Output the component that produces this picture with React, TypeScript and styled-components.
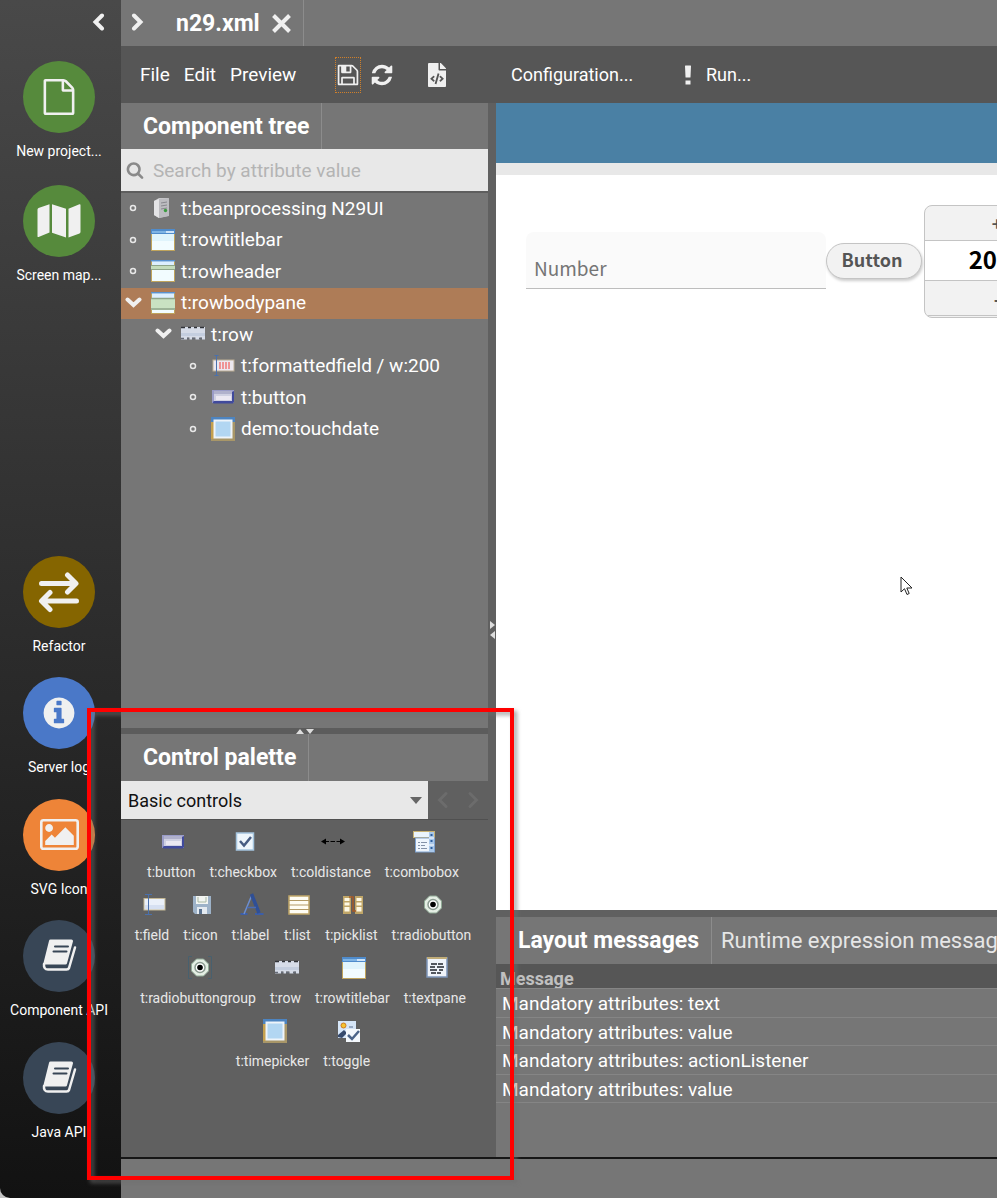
import React from "react";
import styled, { createGlobalStyle, css } from "styled-components";
import { FaFileCode } from "react-icons/fa";

const ui = `Roboto, "Open Sans", sans-serif`;
const source = `"Noto Sans CJK JP", "Noto Sans", sans-serif`;

const GlobalStyle = createGlobalStyle`
  * { box-sizing: border-box; }
  body { margin: 0; background: #c4c4c4; font-family: ${ui}; font-size: 19px; color: #fff; }
  button, input, select { font: inherit; color: inherit; }
  button { background: none; border: 0; padding: 0; cursor: pointer; }
  ul { list-style: none; margin: 0; padding: 0; }
  svg { display: block; flex: none; }
`;

/* ---------- line icons ---------- */

const paths = {
  file: "M1596 380q28 28 48 76t20 88v1152q0 40-28 68t-68 28h-1344q-40 0-68-28t-28-68v-1600q0-40 28-68t68-28h896q40 0 88 20t76 48zm-444-244v376h376q-10-29-22-41l-313-313q-12-12-41-22zm384 1528v-1024h-416q-40 0-68-28t-28-68v-416h-768v1536h1280z",
  info: "M1152 1376v-160q0-14-9-23t-23-9h-96v-512q0-14-9-23t-23-9h-320q-14 0-23 9t-9 23v160q0 14 9 23t23 9h96v320h-96q-14 0-23 9t-9 23v160q0 14 9 23t23 9h448q14 0 23-9t9-23zm-128-896v-160q0-14-9-23t-23-9h-192q-14 0-23 9t-9 23v160q0 14 9 23t23 9h192q14 0 23-9t9-23zm640 416q0 209-103 385.5t-279.5 279.5-385.5 103-385.5-103-279.5-279.5-103-385.5 103-385.5 279.5-279.5 385.5-103 385.5 103 279.5 279.5 103 385.5z",
  picture: "M576 576q0 80-56 136t-136 56-136-56-56-136 56-136 136-56 136 56 56 136zm1024 384v448h-1408v-192l320-320 160 160 512-512zm96-704h-1600q-13 0-22.5 9.5t-9.5 22.5v1216q0 13 9.5 22.5t22.5 9.5h1600q13 0 22.5-9.5t9.5-22.5v-1216q0-13-9.5-22.5t-22.5-9.5zm160 32v1216q0 66-47 113t-113 47h-1600q-66 0-113-47t-47-113v-1216q0-66 47-113t113-47h1600q66 0 113 47t47 113z",
  save: "M512 1536h768v-384h-768v384zm896 0h128v-896q0-14-10-38.5t-20-34.5l-281-281q-10-10-34-20t-39-10v416q0 40-28 68t-68 28h-576q-40 0-68-28t-28-68v-416h-128v1280h128v-416q0-40 28-68t68-28h832q40 0 68 28t28 68v416zm-384-928v-320q0-13-9.5-22.5t-22.5-9.5h-192q-13 0-22.5 9.5t-9.5 22.5v320q0 13 9.5 22.5t22.5 9.5h192q13 0 22.5-9.5t9.5-22.5zm640 32v928q0 40-28 68t-68 28h-1344q-40 0-68-28t-28-68v-1344q0-40 28-68t68-28h928q40 0 88 20t76 48l280 280q28 28 48 76t20 88z",
  refresh: "M1639 1056q0 5-1 7-64 268-268 434.5t-478 166.5q-146 0-282.5-55t-243.5-157l-129 129q-19 19-45 19t-45-19-19-45v-448q0-26 19-45t45-19h448q26 0 45 19t19 45-19 45l-137 137q71 66 161 102t187 36q134 0 250-65t186-179q11-17 53-117 8-23 30-23h192q13 0 22.5 9.5t9.5 22.5zm25-800v448q0 26-19 45t-45 19h-448q-26 0-45-19t-19-45 19-45l138-138q-148-137-349-137-134 0-250 65t-186 179q-11 17-53 117-8 23-30 23h-199q-13 0-22.5-9.5t-9.5-22.5v-7q65-268 270-434.5t480-166.5q146 0 284 55.5t245 156.5l130-129q19-19 45-19t45 19 19 45z",
  search: "M1216 832q0-185-131.5-316.5t-316.5-131.5-316.5 131.5-131.5 316.5 131.5 316.5 316.5 131.5 316.5-131.5 131.5-316.5zm512 832q0 52-38 90t-90 38q-54 0-90-38l-343-342q-179 124-399 124-143 0-273.5-55.5t-225-150-150-225-55.5-273.5 55.5-273.5 150-225 225-150 273.5-55.5 273.5 55.5 225 150 150 225 55.5 273.5q0 220-124 399l343 343q37 37 37 90z",
};

function Glyph({ name, size, box = "0 0 1792 1792" }: { name: keyof typeof paths; size: number; box?: string }) {
  return (
    <svg width={size} height={size} viewBox={box} fill="currentColor" aria-hidden="true">
      <path d={paths[name]} />
    </svg>
  );
}

function MapGlyph() {
  return (
    <svg width="44" height="36" viewBox="0 0 44 36" fill="currentColor" aria-hidden="true">
      <path d="M0.5 6.5Q.5 5.500 1.500 5L12.500 1.200V29.500L1.600 34Q.5 34.300.5 33.200ZM15 1.200L29 5.800V34.500L15 29.700ZM31.500 5.800L42.400 1.300Q43.500 1 43.500 2.100V29Q43.500 30 42.500 30.400L31.500 34.500Z" />
    </svg>
  );
}

function BookGlyph() {
  return (
    <svg width="36" height="36" viewBox="0 0 36 36" fill="none" strokeLinejoin="round" aria-hidden="true">
      <path d="M9.500 3H30.500L24.500 25H4Z" fill="currentColor" stroke="currentColor" strokeWidth="3" />
      <path d="M3 26Q2.500 31.500 7 31.500H25.500Q27.500 31.500 28 30L34 9.500" stroke="currentColor" strokeWidth="2.500" strokeLinecap="round" />
      <path d="M14 8.500H27M12.500 13.500H25.500" stroke="#384656" strokeWidth="2" strokeLinecap="round" />
    </svg>
  );
}

function SwapGlyph() {
  return (
    <svg width="42" height="42" viewBox="0 0 42 42" fill="none" stroke="currentColor" strokeWidth="5" strokeLinecap="round" strokeLinejoin="round" aria-hidden="true">
      <path d="M3.500 12.500H37.500M29.500 4L38 12.500L29.500 21M38.500 30H4M12 21.500L3.500 30L12 38.500" />
    </svg>
  );
}

function Chevron({ dir, stroke = 4 }: { dir: "left" | "right" | "down"; stroke?: number }) {
  const d = { left: "M11 2.500L4.500 9L11 15.500", right: "M5 2.500L11.500 9L5 15.500", down: "M2.500 5.500L8.500 11L14.500 5.500" }[dir];
  return (
    <svg width="17" height="18" viewBox="0 0 17 18" fill="none" stroke="currentColor" strokeWidth={stroke} strokeLinecap="round" aria-hidden="true">
      <path d={d} />
    </svg>
  );
}

/* ---------- component pictograms, all on a 24px tile ---------- */

type Kind =
  | "server" | "titlebar" | "header" | "body" | "row" | "formatted" | "button" | "panel"
  | "checkbox" | "distance" | "combo" | "field" | "disk" | "letter" | "list" | "picklist"
  | "radio" | "radiogroup" | "textpane" | "toggle";

const windowFrame = (
  <>
    <rect x="0.500" y="1.500" width="23" height="21" fill="#f2fcff" stroke="#c0a45c" />
    <path d="M0 1h24v1.500H0z" fill="#5a92d0" />
  </>
);

const radioDot = (
  <>
    <path d="M8.500 3h7l5 5v7l-5 5h-7l-5-5V8z" fill="#e4eee4" stroke="#90aa96" />
    <circle cx="12" cy="11.500" r="5" fill="#fff" stroke="#8a9a90" strokeWidth="1.500" />
    <circle cx="12" cy="11.500" r="2.800" fill="#000" />
  </>
);

const art: Record<Kind, React.ReactNode> = {
  server: (
    <>
      <path d="M3 5l5-3h9v18l-9 2-5-3z" fill="#c9c9cb" />
      <path d="M3 5l5-2v19l-5-3z" fill="#e4e4e6" />
      <path d="M8 3l10-1v18L8 22z" fill="#bcbcc0" />
      <path d="M10 7l6-1M10 10l6-1M10 13l6-1" stroke="#88888e" />
      <circle cx="14.500" cy="14.500" r="1.700" fill="#3a9c3e" />
    </>
  ),
  titlebar: (
    <>
      {windowFrame}
      <path d="M0 1h24v5H0z" fill="#4f8bcb" />
      <path d="M1 3h14v2H1z" fill="#7fb4e4" />
      <path d="M15 3h8v2h-8z" fill="#cfe4f8" />
      <path d="M1 6h22v7H1z" fill="#e0f4fc" />
    </>
  ),
  header: (
    <>
      {windowFrame}
      <path d="M1 3h22v3H1z" fill="#ddefff" />
      <path d="M0 6h24v5H0z" fill="#c4dcbc" />
      <path d="M0 6.500h24M0 10.500h24" stroke="#8fa58a" />
    </>
  ),
  body: (
    <>
      {windowFrame}
      <path d="M1 3h22v4H1z" fill="#ddefff" />
      <path d="M0 7h24v12H0z" fill="#c9e2c2" />
      <path d="M0 7.500h24M0 18h24" stroke="#8fa58a" strokeWidth="1.500" />
    </>
  ),
  row: (
    <>
      <path d="M0 5h24v12.500h-3v-2h-2.500v2h-4v-2H11v2H8.500v-2H6v2H0z" fill="#d6dce8" />
      <path d="M0 11h24v3H0z" fill="#c4cedf" />
      <path d="M0 5.500h4M7 5.500h3M13 5.500h3M19 5.500h4" stroke="#303338" strokeWidth="1.500" />
      <path d="M0 16.500h3M6 16.500h2M11 16.500h3M18 16.500h3" stroke="#666c78" strokeWidth="1.500" />
    </>
  ),
  formatted: (
    <>
      <rect x="2" y="6" width="21" height="11" fill="#ece8f0" stroke="#bcae94" />
      <path d="M9 8v7M12 8v7M15 8v7M18 8v7" stroke="#f08080" strokeWidth="1.600" />
      <path d="M5.500 1.500v20M3.500 1.500h4M3.500 21.500h4" stroke="#4a70ac" />
    </>
  ),
  button: (
    <>
      <path d="M1 5h22v13H1z" fill="#9a9cc8" />
      <path d="M1.500 17l1 1.500H22l1-1.500V6z" fill="#404a9c" />
      <rect x="3" y="6" width="18" height="10" fill="#cfd0e2" />
      <path d="M3 6h18v3H3z" fill="#b0b1cc" />
      <path d="M5 11h15v4H5z" fill="#ebe8f2" />
    </>
  ),
  panel: (
    <>
      <path d="M0 0h24v24H0z" fill="#a89668" />
      <path d="M0 0h24v5H0z" fill="#4d84c0" />
      <path d="M0 5h3v17H0z" fill="#c4a04e" />
      <rect x="3.500" y="3.500" width="17" height="17" fill="#b2d6f2" stroke="#eef4fa" strokeWidth="2" />
    </>
  ),
  checkbox: (
    <>
      <rect x="3.500" y="3" width="17" height="17" fill="#eef6fc" stroke="#a4c4de" strokeWidth="1.500" />
      <path d="M7 11l4 4.500 7-8.500" fill="none" stroke="#465c82" strokeWidth="2.500" />
    </>
  ),
  distance: (
    <>
      <path d="M2 11.500h20" stroke="#000" />
      <path d="M0 11.500l5-3v6zM24 11.500l-5-3v6z" fill="#000" />
      <path d="M8 11.500h1.500M14 11.500h1.500" stroke="#606060" />
    </>
  ),
  combo: (
    <>
      <rect x="1.500" y="1.500" width="21" height="6" fill="#eaf4fc" stroke="#c8b272" />
      <rect x="3.500" y="8" width="19" height="14" fill="#eef5fc" stroke="#7ea2d0" />
      <path d="M17 2h5v20h-5z" fill="#a9c8ea" />
      <path d="M18.500 5h2M18.500 11h2M18.500 18h2" stroke="#2c5fa0" strokeWidth="2" />
      <path d="M6 12.500h2M9 12.500h6M6 15.500h2M9 15.500h4M6 18.500h2M9 18.500h6" stroke="#8492a8" />
      <path d="M17 8h5M17 15h5" stroke="#fff" />
    </>
  ),
  field: (
    <>
      <rect x="2" y="5.500" width="21" height="11.500" fill="#eaf0fa" stroke="#c4b894" />
      <path d="M3 12h19v4H3z" fill="#d6e0f2" />
      <path d="M6.500 1.500v20M3 1.500h7M3 21.500h7" stroke="#4a70ac" />
    </>
  ),
  disk: (
    <>
      <path d="M3 3h18v18H5l-2-2z" fill="#9db2c8" />
      <path d="M6 3h12v8H6z" fill="#f2f5f2" />
      <path d="M7 14h10v7H7z" fill="#e4eaf0" />
      <path d="M9 16h3v5H9z" fill="#5a7290" />
      <path d="M8 4v5h8V4" fill="none" stroke="#a9b8a4" />
    </>
  ),
  letter: (
    <>
      <path d="M0.500 21h7M15 21h8.500" stroke="#3c5ea8" strokeWidth="2" />
      <path d="M11.500 3L4 21" stroke="#6c8ed0" strokeWidth="1.500" />
      <path d="M11.500 1l7.500 19" stroke="#2f4f96" strokeWidth="3.500" />
      <path d="M7 14.500h9" stroke="#4a6cb4" strokeWidth="1.500" />
    </>
  ),
  list: (
    <>
      <rect x="2" y="3" width="20" height="18" fill="#fffdf4" stroke="#c0a668" strokeWidth="1.500" />
      <path d="M2 7.500h20M2 12h20M2 16.500h20" stroke="#b39a66" strokeWidth="1.200" />
    </>
  ),
  picklist: (
    <>
      <path d="M2 3h8v18H2zM14 3h8v18h-8z" fill="#c0a668" />
      <path d="M3.500 5h5v3h-5zM3.500 9.500h5v3h-5zM3.500 14h5v4.500h-5zM15.500 5h5v3h-5zM15.500 9.500h5v3h-5zM15.500 14h5v4.500h-5z" fill="#fdf8e4" />
      <path d="M8 4h4v14h3" fill="none" stroke="#a85a24" strokeWidth="1.500" />
    </>
  ),
  radio: radioDot,
  radiogroup: (
    <>
      {radioDot}
      <path d="M4 .5H.5v22H4M20 .5h3.500v22H20" fill="none" stroke="#48606e" />
    </>
  ),
  textpane: (
    <>
      <rect x="2" y="2" width="20" height="19" fill="#f0f4fa" stroke="#7c94b8" strokeWidth="1.500" />
      <path d="M2 2h20" stroke="#c0ac78" strokeWidth="2" />
      <path d="M6 8h6M13 8h5M5 11h5M12 11h7M5 14h7M14 14h4M6 17h5M12 17h4" stroke="#20242c" strokeWidth="1.500" />
    </>
  ),
  toggle: (
    <>
      <rect x="1" y="2" width="18" height="17" fill="#d6e6f8" />
      <circle cx="6.500" cy="6.500" r="2.500" fill="#f4c430" stroke="#d07a20" />
      <path d="M1 18v-2l6-5 3 3-5 5z" fill="#364a6c" />
      <path d="M12 8h4" stroke="#5a6f90" />
      <path d="M9 10h14v13H9z" fill="#f4f8fc" />
      <path d="M11 16l4 4 7-8" fill="none" stroke="#4c6488" strokeWidth="2.500" />
    </>
  ),
};

function Picto({ kind }: { kind: Kind }) {
  return (
    <svg width="24" height="24" viewBox="0 0 24 24" aria-hidden="true">
      {art[kind]}
    </svg>
  );
}

/* ---------- frame ---------- */

const Shell = styled.div`
  position: relative;
  display: flex;
  min-height: 100vh;
  overflow: hidden;
`;

const Sidebar = styled.nav`
  display: flex;
  flex-direction: column;
  flex: none;
  width: 121px;
  padding: 0 3px 35px 0;
  background: linear-gradient(#494949, #121212);
  border-bottom-left-radius: 10px;
`;

const SidebarTop = styled.div`
  display: flex;
  justify-content: flex-end;
  align-items: center;
  height: 44px;
  margin-bottom: 17px;
  padding-right: 10px;
  color: #f0f0f0;
`;

const Launchers = styled.ul<{ $bottom?: boolean }>`
  display: grid;
  grid-auto-rows: 1fr;
  height: ${(p) => (p.$bottom ? 607 : 248)}px;
  ${(p) => p.$bottom && css`margin-top: auto;`}
`;

const Launcher = styled.button`
  display: flex;
  flex-direction: column;
  align-items: center;
  gap: 8px;
  width: 100%;
  font-size: 14px;
  line-height: 20px;
  white-space: nowrap;
  color: #fff;
`;

const Disc = styled.span<{ $color: string }>`
  display: grid;
  place-items: center;
  width: 72px;
  height: 72px;
  border-radius: 50%;
  background: ${(p) => p.$color};
  color: #f0f0f0;
`;

const Workspace = styled.div`
  display: flex;
  flex-direction: column;
  flex: 1;
  min-width: 0;
  background: #777;
`;

const TabStrip = styled.div<{ $height: number }>`
  display: flex;
  flex: none;
  height: ${(p) => p.$height}px;
  background: #767676;
  overflow: hidden;
`;

const Tab = styled.div<{ $active?: boolean; $indent?: number }>`
  display: flex;
  align-items: center;
  flex: none;
  gap: 12px;
  padding: 0 12px 0 ${(p) => p.$indent ?? 22}px;
  border-right: 1px solid #8c8c8c;
  font-size: ${(p) => (p.$active ? 23 : 22)}px;
  font-weight: ${(p) => (p.$active ? 700 : 400)};
  color: ${(p) => (p.$active ? "#fff" : "#e6e6e6")};
  white-space: nowrap;
`;

const StripButton = styled.button`
  display: grid;
  place-items: center;
  width: 33px;
  height: 44px;
  color: #f0f0f0;
`;

const Toolbar = styled.div`
  display: flex;
  align-items: center;
  flex: none;
  height: 57px;
  padding-left: 19px;
  background: #565656;
`;

const Menus = styled.div`
  display: flex;
  gap: 14px;
  width: 195px;
`;

const IconTools = styled.div`
  display: flex;
  align-items: center;
  gap: 8px;
  width: 176px;
  color: #f0f0f0;
`;

const IconTool = styled.button<{ $focus?: boolean; $apart?: boolean }>`
  display: grid;
  place-items: center;
  width: 26px;
  height: 36px;
  ${(p) => p.$focus && css`border: 1px dotted #d0802a;`}
  ${(p) => p.$apart && css`margin-left: 21px;`}
`;

const TextTool = styled.button`
  display: flex;
  align-items: center;
  gap: 14px;
  min-width: 173px;
  font-size: 18px;
`;

const Columns = styled.div`
  display: flex;
  flex: 1;
  min-height: 0;
  border-bottom: 2px solid #161616;
`;

const StatusBar = styled.footer`
  flex: none;
  height: 39px;
  background: #767676;
`;

/* ---------- left column ---------- */

const LeftColumn = styled.aside`
  display: flex;
  flex-direction: column;
  flex: none;
  width: 367px;
`;

const SearchBox = styled.label`
  display: flex;
  align-items: center;
  flex: none;
  gap: 9px;
  height: 44px;
  padding-left: 5px;
  background: #e8e8e8;
  border-bottom: 2px solid #5e5e5e;
  color: #8a8a8a;
`;

const SearchInput = styled.input`
  flex: 1;
  min-width: 0;
  border: 0;
  padding: 0;
  outline: 0;
  background: none;
  color: #333;
  &::placeholder { color: #b4b4b4; opacity: 1; }
`;

const TreePane = styled.div`
  flex: 1;
  background: #767676;
`;

const Tree = styled.ul`
  display: grid;
  grid-auto-rows: 1fr;
  height: 252px;
`;

const TreeRow = styled.li<{ $depth: number; $selected?: boolean }>`
  display: flex;
  align-items: center;
  padding: 0 0 1px ${(p) => p.$depth * 30}px;
  background: ${(p) => (p.$selected ? "#ae7c57" : "none")};
`;

const Toggle = styled.span`
  display: grid;
  place-items: center;
  width: 24px;
  margin-right: 6px;
  color: #f0f0f0;
`;

const TreeLabel = styled.button`
  display: flex;
  align-items: center;
  gap: 6px;
  white-space: nowrap;
`;

const HSplitter = styled.div`
  display: flex;
  justify-content: center;
  align-items: center;
  flex: none;
  height: 6px;
  background: #5c5c5c;
`;

const VSplitter = styled.div`
  display: flex;
  flex-direction: column;
  justify-content: center;
  align-items: center;
  flex: none;
  width: 8px;
  background: #606060;
`;

const Palette = styled.section`
  flex: none;
  height: 423px;
  background: #606060;
`;

const PaletteBar = styled.div`
  display: flex;
  align-items: center;
  height: 39px;
  border-bottom: 1px solid #505050;
  color: #6c6c6c;
`;

const SelectWrap = styled.div`
  display: grid;
  align-items: center;
  width: 307px;
  height: 38px;
  background: #e8e8e8;
  > * { grid-area: 1 / 1; }
  > svg { justify-self: end; margin-right: 5px; pointer-events: none; }
`;

const Select = styled.select`
  appearance: none;
  width: 100%;
  height: 100%;
  padding: 0 24px 0 7px;
  border: 0;
  border-radius: 0;
  outline: 0;
  background: none;
  color: #111;
  font-size: 18px;
`;

const PageButton = styled.button`
  display: grid;
  place-items: center;
  width: 30px;
`;

const PaletteRow = styled.div`
  display: flex;
  justify-content: center;
  gap: 14px;
  height: 63px;
  padding: 10px 3px 0 0;
`;

const PaletteItem = styled.button`
  display: flex;
  flex-direction: column;
  align-items: center;
  gap: 8px;
  font-size: 14px;
  line-height: 20px;
  color: #e8e8e8;
  white-space: nowrap;
  svg { margin-left: 4px; }
`;

/* ---------- right column ---------- */

const RightColumn = styled.main`
  display: flex;
  flex-direction: column;
  flex: 1;
  min-width: 0;
`;

const PreviewTitle = styled.div`
  flex: none;
  height: 72px;
  background: #4a80a4;
  border-bottom: 12px solid #e8e8e8;
`;

const Preview = styled.div`
  position: relative;
  display: flex;
  align-items: flex-start;
  flex: 1;
  padding: 30px 0 0 30px;
  background: #fff;
  overflow: hidden;
  font-family: ${source};
`;

const PreviewRow = styled.div`
  display: flex;
  align-items: center;
  flex: none;
  height: 111px;
`;

const NumberField = styled.input`
  width: 300px;
  height: 57px;
  padding: 14px 8px 0;
  border: 0;
  border-bottom: 1px solid #bdbdbd;
  border-radius: 8px 8px 0 0;
  outline: 0;
  background: #fafafa;
  font-size: 19px;
  &::placeholder { color: #757575; opacity: 1; }
`;

const PillButton = styled.button`
  width: 96px;
  height: 36px;
  padding: 0 4px 4px 0;
  border: 1px solid #c4c4c4;
  border-radius: 18px;
  background: #f2f2f2;
  box-shadow: 1px 2px 3px rgba(0, 0, 0, 0.2);
  font-size: 18px;
  font-weight: 700;
  line-height: 24px;
  color: #555;
`;

const Stepper = styled.div`
  align-self: flex-start;
  display: flex;
  flex-direction: column;
  width: 146px;
  height: 113px;
  margin-left: 2px;
  border: 1px solid #c4c4c4;
  border-radius: 8px;
  overflow: hidden;
  background: #f2f2f2;
`;

const StepButton = styled.button`
  height: 35px;
  border-bottom: 1px solid #c4c4c4;
  font-size: 18px;
  font-weight: 700;
  line-height: 20px;
  color: #555;
`;

const StepValue = styled.output`
  height: 40px;
  background: #fff;
  border-bottom: 1px solid #c4c4c4;
  font-size: 24px;
  font-weight: 700;
  line-height: 36px;
  text-align: center;
  color: #000;
`;

const Pointer = styled.svg`
  position: absolute;
  left: 404px;
  top: 401px;
`;

const Messages = styled.section`
  flex: none;
  height: 247px;
  border-top: 7px solid #606060;
  background: #767676;
  overflow: hidden;
`;

const MessageTable = styled.table`
  width: 100%;
  border-collapse: collapse;
  text-align: left;
  line-height: 24px;
  th {
    height: 24px;
    padding: 0 4px;
    background: #565656;
    color: #c0c0c0;
    font-size: 18px;
  }
  th span {
    display: block;
    height: 24px;
    line-height: 30px;
    overflow: hidden;
  }
  td {
    height: 29px;
    padding: 2px 6px 0;
    border-top: 1px solid #858585;
    border-bottom: 1px solid #858585;
    white-space: nowrap;
  }
  tr:nth-child(even) td { height: 28px; }
`;

const Highlight = styled.div`
  position: absolute;
  left: 87px;
  top: 708px;
  width: 427px;
  height: 472px;
  border: 4px solid #f00;
  filter: drop-shadow(3px 3px 2px rgba(110, 110, 110, 0.65));
  pointer-events: none;
`;

/* ---------- data ---------- */

const topLaunchers = [
  { label: "New project...", color: "#568a3c", icon: <Glyph name="file" size={36} /> },
  { label: "Screen map...", color: "#568a3c", icon: <MapGlyph /> },
];

const bottomLaunchers = [
  { label: "Refactor", color: "#856500", icon: <SwapGlyph /> },
  { label: "Server log", color: "#4a78c8", icon: <Glyph name="info" size={36} /> },
  { label: "SVG Icon", color: "#ee8438", icon: <Glyph name="picture" size={39} box="-64 0 1920 1792" /> },
  { label: "Component API", color: "#384656", icon: <BookGlyph /> },
  { label: "Java API", color: "#384656", icon: <BookGlyph /> },
];

const tree: { label: string; kind: Kind; depth: number; open?: boolean; selected?: boolean }[] = [
  { label: "t:beanprocessing N29UI", kind: "server", depth: 0 },
  { label: "t:rowtitlebar", kind: "titlebar", depth: 0 },
  { label: "t:rowheader", kind: "header", depth: 0 },
  { label: "t:rowbodypane", kind: "body", depth: 0, open: true, selected: true },
  { label: "t:row", kind: "row", depth: 1, open: true },
  { label: "t:formattedfield / w:200", kind: "formatted", depth: 2 },
  { label: "t:button", kind: "button", depth: 2 },
  { label: "demo:touchdate", kind: "panel", depth: 2 },
];

const palette: [string, Kind][][] = [
  [["t:button", "button"], ["t:checkbox", "checkbox"], ["t:coldistance", "distance"], ["t:combobox", "combo"]],
  [["t:field", "field"], ["t:icon", "disk"], ["t:label", "letter"], ["t:list", "list"], ["t:picklist", "picklist"], ["t:radiobutton", "radio"]],
  [["t:radiobuttongroup", "radiogroup"], ["t:row", "row"], ["t:rowtitlebar", "titlebar"], ["t:textpane", "textpane"]],
  [["t:timepicker", "panel"], ["t:toggle", "toggle"]],
];

const messages = ["text", "value", "actionListener", "value"];

function LauncherList({ items, bottom }: { items: typeof topLaunchers; bottom?: boolean }) {
  return (
    <Launchers $bottom={bottom}>
      {items.map((l) => (
        <li key={l.label}>
          <Launcher>
            <Disc $color={l.color}>{l.icon}</Disc>
            {l.label}
          </Launcher>
        </li>
      ))}
    </Launchers>
  );
}

function Leaf() {
  return (
    <svg width="8" height="8" viewBox="0 0 8 8" fill="none" stroke="#e8e8e8" strokeWidth="1.500" aria-hidden="true">
      <circle cx="4" cy="4" r="2.500" />
    </svg>
  );
}

export default function App() {
  return (
    <>
      <GlobalStyle />
      <Shell>
        <Sidebar>
          <SidebarTop>
            <button aria-label="Collapse sidebar"><Chevron dir="left" /></button>
          </SidebarTop>
          <LauncherList items={topLaunchers} />
          <LauncherList items={bottomLaunchers} bottom />
        </Sidebar>

        <Workspace>
          <TabStrip $height={46}>
            <StripButton aria-label="Next tab"><Chevron dir="right" /></StripButton>
            <Tab $active>
              n29.xml
              <button aria-label="Close tab">
                <svg width="19" height="19" viewBox="0 0 19 19" stroke="#f0f0f0" strokeWidth="4">
                  <path d="M1.500 1.500l16 16M17.500 1.500l-16 16" />
                </svg>
              </button>
            </Tab>
          </TabStrip>

          <Toolbar>
            <Menus>
              <button>File</button>
              <button>Edit</button>
              <button>Preview</button>
            </Menus>
            <IconTools>
              <IconTool $focus aria-label="Save"><Glyph name="save" size={24} /></IconTool>
              <IconTool aria-label="Reload"><Glyph name="refresh" size={24} /></IconTool>
              <IconTool $apart aria-label="View source"><FaFileCode size={24} /></IconTool>
            </IconTools>
            <TextTool>Configuration...</TextTool>
            <TextTool>
              <svg width="8" height="20" viewBox="0 0 8 20" fill="#f0f0f0" aria-hidden="true">
                <path d="M1 1Q1 .5 1.500.5H6.500Q7 .5 7 1L6.500 12Q6.500 12.500 6 12.500H2Q1.500 12.500 1.500 12ZM1.500 15.500h5v4h-5z" />
              </svg>
              Run...
            </TextTool>
          </Toolbar>

          <Columns>
            <LeftColumn>
              <TabStrip $height={46}>
                <Tab $active>Component tree</Tab>
              </TabStrip>
              <SearchBox>
                <Glyph name="search" size={18} />
                <SearchInput placeholder="Search by attribute value" aria-label="Search by attribute value" />
              </SearchBox>
              <TreePane>
                <Tree>
                  {tree.map((n) => (
                    <TreeRow key={n.label} $depth={n.depth} $selected={n.selected}>
                      <Toggle>{n.open ? <Chevron dir="down" /> : <Leaf />}</Toggle>
                      <TreeLabel><Picto kind={n.kind} />{n.label}</TreeLabel>
                    </TreeRow>
                  ))}
                </Tree>
              </TreePane>
              <HSplitter>
                <svg width="18" height="6" viewBox="0 0 18 6" fill="#ddd" aria-hidden="true">
                  <path d="M0 6L4 1l4 5zM10 1h8l-4 5z" />
                </svg>
              </HSplitter>
              <Palette>
                <TabStrip $height={47}>
                  <Tab $active>Control palette</Tab>
                </TabStrip>
                <PaletteBar>
                  <SelectWrap>
                    <Select aria-label="Control group">
                      <option>Basic controls</option>
                    </Select>
                    <svg width="14" height="7" viewBox="0 0 14 7" fill="#666" aria-hidden="true">
                      <path d="M1 0h12l-6 7z" />
                    </svg>
                  </SelectWrap>
                  <PageButton aria-label="Previous controls"><Chevron dir="left" stroke={3} /></PageButton>
                  <PageButton aria-label="Next controls"><Chevron dir="right" stroke={3} /></PageButton>
                </PaletteBar>
                {palette.map((row, i) => (
                  <PaletteRow key={i}>
                    {row.map(([label, kind]) => (
                      <PaletteItem key={label}><Picto kind={kind} />{label}</PaletteItem>
                    ))}
                  </PaletteRow>
                ))}
              </Palette>
            </LeftColumn>

            <VSplitter>
              <svg width="6" height="18" viewBox="0 0 6 18" fill="#ddd" aria-hidden="true">
                <path d="M1 0l5 4-5 4zM6 10v8l-5-4z" />
              </svg>
            </VSplitter>

            <RightColumn>
              <PreviewTitle />
              <Preview>
                <PreviewRow>
                  <NumberField placeholder="Number" aria-label="Number" />
                  <PillButton>Button</PillButton>
                  <Stepper>
                    <StepButton aria-label="Increase">+</StepButton>
                    <StepValue>2020</StepValue>
                    <StepButton aria-label="Decrease">-</StepButton>
                  </Stepper>
                </PreviewRow>
                <Pointer width="13" height="20" viewBox="0 0 13 20" aria-hidden="true">
                  <path d="M1 1v15l3.500-3.300L7 18.500l2.200-1L6.800 12H12z" fill="#fff" stroke="#222" strokeLinejoin="round" />
                </Pointer>
              </Preview>
              <Messages>
                <TabStrip $height={47}>
                  <Tab $active>Layout messages</Tab>
                  <Tab $indent={9}>Runtime expression messages</Tab>
                </TabStrip>
                <MessageTable>
                  <thead>
                    <tr><th scope="col"><span>Message</span></th></tr>
                  </thead>
                  <tbody>
                    {messages.map((m, i) => (
                      <tr key={i}><td>Mandatory attributes: {m}</td></tr>
                    ))}
                  </tbody>
                </MessageTable>
              </Messages>
            </RightColumn>
          </Columns>
          <StatusBar />
        </Workspace>
        <Highlight />
      </Shell>
    </>
  );
}
